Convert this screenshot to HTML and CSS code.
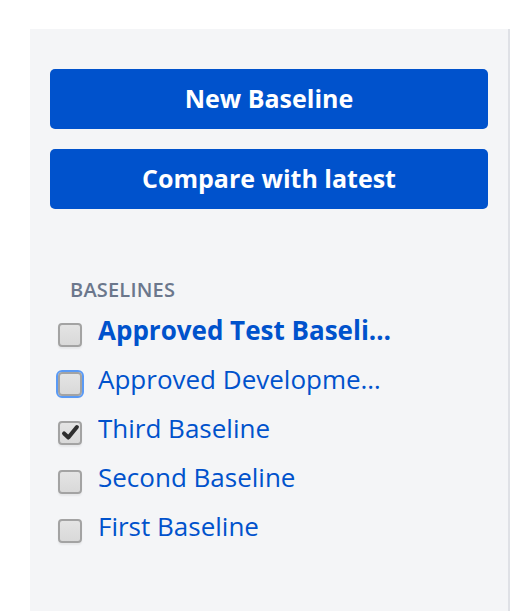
FILE: index.html
```html
<!DOCTYPE html>
<html>
<head>
<meta charset="utf-8">
<link rel="stylesheet" href="styles.css">
</head>
<body>
<aside class="panel">
  <div class="actions">
    <button class="btn">New Baseline</button>
    <button class="btn">Compare with latest</button>
  </div>
  <section class="baselines">
    <h3 class="label">BASELINES</h3>
    <ul class="list">
      <li class="item"><span class="box"></span><span class="name bold">Approved Test Baseline Name</span></li>
      <li class="item"><span class="box focus"></span><span class="name">Approved Development Baseline</span></li>
      <li class="item"><span class="box checked"><svg viewBox="0 0 16 16" width="19" height="19"><path d="M2.6 8.8 L6.2 12.2 L13.4 3.4" fill="none" stroke="#2e2e2e" stroke-width="3.4" stroke-linecap="round" stroke-linejoin="round"/></svg></span><span class="name">Third Baseline</span></li>
      <li class="item"><span class="box"></span><span class="name">Second Baseline</span></li>
      <li class="item"><span class="box"></span><span class="name">First Baseline</span></li>
    </ul>
  </section>
</aside>
</body>
</html>
```
FILE: styles.css
```css
html, body {
  margin: 0;
  padding: 0;
  background: #ffffff;
  font-family: "Open Sans", "Noto Sans", sans-serif;
}
body {
  padding: 29px 0 0 30px;
  height: 611px;
  box-sizing: border-box;
  overflow: hidden;
}
.panel {
  box-sizing: border-box;
  width: 480px;
  height: 582px;
  background: #f4f5f7;
  border-right: 2px solid #dfe1e6;
  padding: 40px 20px 0 20px;
}
.actions {
  display: flex;
  flex-direction: column;
  gap: 20px;
}
.btn {
  height: 60px;
  width: 438px;
  border: none;
  border-radius: 5px;
  background: #0052cc;
  color: #ffffff;
  font-family: "Open Sans", "Noto Sans", sans-serif;
  font-weight: 700;
  font-size: 25px;
  padding: 0 0 2px 0;
}
.baselines {
  margin-top: 68px;
}
.label {
  margin: 0 0 0 20px;
  font-size: 20px;
  font-weight: 600;
  color: #6b778c;
  line-height: 26px;
  letter-spacing: 0.2px;
}
.list {
  list-style: none;
  margin: 2px 0 0 0;
  padding: 0;
}
.item {
  display: flex;
  align-items: center;
  height: 49px;
  padding-left: 8px;
}
.box {
  flex: none;
  width: 24px;
  height: 24px;
  box-sizing: border-box;
  border: 2px solid #a3a3a3;
  border-radius: 4px;
  background: linear-gradient(#e4e4e4, #d9d9d9);
  box-shadow: 0 2px 2px rgba(0,0,0,0.06);
  margin-top: 10px;
  display: flex;
  align-items: center;
  justify-content: center;
}
.box.focus {
  outline: 2px solid #5a9af5;
  outline-offset: 0px;
}
.name {
  margin-left: 16px;
  font-size: 26px;
  color: #0052cc;
  white-space: nowrap;
  overflow: hidden;
  text-overflow: ellipsis;
  max-width: 296px;
  line-height: 34px;
}
.name.bold {
  font-weight: 700;
}
```
